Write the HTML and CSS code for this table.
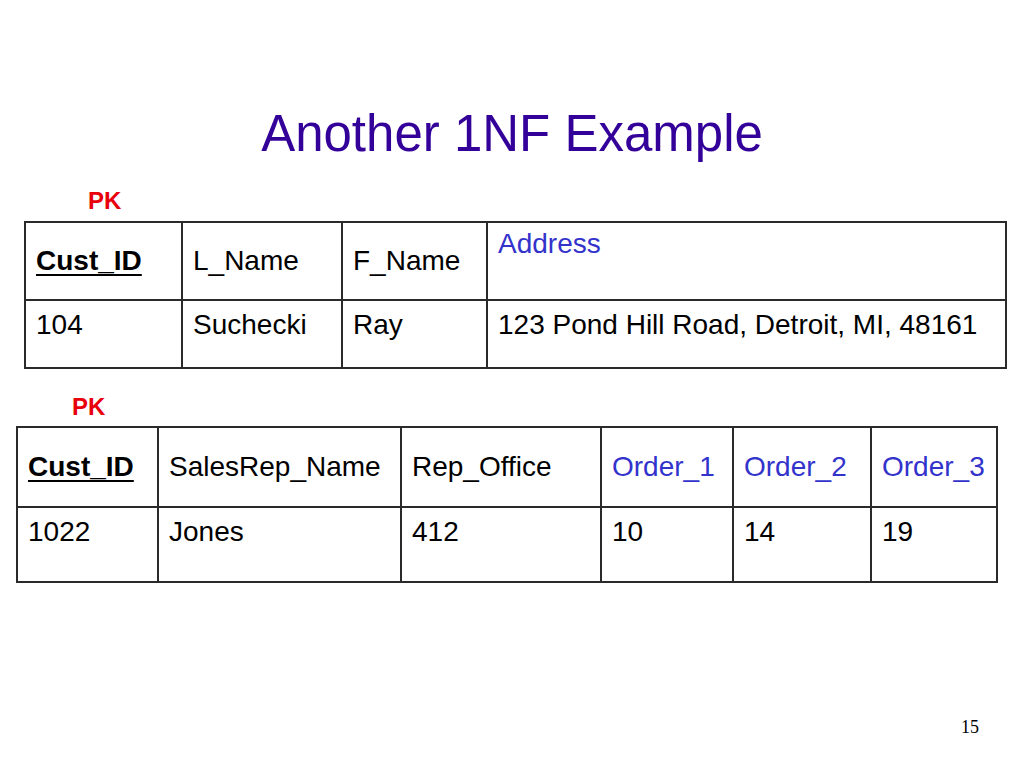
FILE: index.html
```html
<!DOCTYPE html>
<html>
<head>
<meta charset="utf-8">
<link rel="stylesheet" href="styles.css">
</head>
<body>
<div class="slide">
  <h1 class="title">Another 1NF Example</h1>

  <div class="pk pk-one">PK</div>
  <table class="grid grid-one">
    <colgroup>
      <col class="c1a"><col class="c1b"><col class="c1c"><col class="c1d">
    </colgroup>
    <tr class="head-one">
      <td class="mid"><span class="key">Cust_ID</span></td>
      <td class="mid">L_Name</td>
      <td class="mid">F_Name</td>
      <td class="top blue">Address</td>
    </tr>
    <tr class="data-one">
      <td>104</td>
      <td>Suchecki</td>
      <td>Ray</td>
      <td>123 Pond Hill Road, Detroit, MI, 48161</td>
    </tr>
  </table>

  <div class="pk pk-two">PK</div>
  <table class="grid grid-two">
    <colgroup>
      <col class="c2a"><col class="c2b"><col class="c2c"><col class="c2d"><col class="c2e"><col class="c2f">
    </colgroup>
    <tr class="head-two">
      <td class="mid"><span class="key">Cust_ID</span></td>
      <td class="mid">SalesRep_Name</td>
      <td class="mid">Rep_Office</td>
      <td class="mid blue">Order_1</td>
      <td class="mid blue">Order_2</td>
      <td class="mid blue">Order_3</td>
    </tr>
    <tr class="data-two">
      <td>1022</td>
      <td>Jones</td>
      <td>412</td>
      <td>10</td>
      <td>14</td>
      <td>19</td>
    </tr>
  </table>

  <div class="page-num">15</div>
</div>
</body>
</html>
```

FILE: styles.css
```css
html, body {
  margin: 0;
  padding: 0;
  background: #ffffff;
}

.slide {
  width: 1024px;
  height: 768px;
  display: flex;
  flex-direction: column;
  align-items: flex-start;
  background: #ffffff;
  font-family: "Liberation Sans", Arial, sans-serif;
  color: #000000;
  overflow: hidden;
}

.title {
  align-self: stretch;
  margin: 104px 0 0 0;
  font-weight: normal;
  font-size: 51px;
  line-height: 60px;
  text-align: center;
  color: #330099;
}

.pk {
  font-weight: bold;
  font-size: 24px;
  line-height: 28px;
  color: #e8000b;
}

.pk-one {
  margin-top: 23px;
  padding-left: 88px;
}

.pk-two {
  margin-top: 24px;
  padding-left: 72px;
}

.grid {
  border-collapse: separate;
  border-spacing: 0;
  table-layout: fixed;
  border-left: 2px solid #2a2a2a;
  border-top: 2px solid #2a2a2a;
}

.grid td {
  box-sizing: border-box;
  border-right: 2px solid #2a2a2a;
  border-bottom: 2px solid #2a2a2a;
  padding: 8px 2px 0 10px;
  font-size: 28px;
  line-height: 32px;
  vertical-align: top;
  white-space: nowrap;
}

.grid td.mid {
  vertical-align: middle;
  padding-top: 0;
}

.grid td.top {
  vertical-align: top;
  padding-top: 5px;
}

.blue {
  color: #3333cc;
}

.key {
  font-weight: bold;
  text-decoration: underline;
  text-decoration-thickness: 2px;
  text-underline-offset: 4px;
}

/* table one */
.grid-one {
  margin-top: 6px;
  margin-left: 24px;
  width: 983px;
}
.c1a { width: 157px; }
.c1b { width: 160px; }
.c1c { width: 145px; }
.c1d { width: 519px; }
.head-one td { height: 78px; }
.data-one td { height: 68px; }

/* table two */
.grid-two {
  margin-top: 5px;
  margin-left: 16px;
  width: 982px;
}
.c2a { width: 141px; }
.c2b { width: 243px; }
.c2c { width: 200px; }
.c2d { width: 132px; }
.c2e { width: 138px; }
.c2f { width: 126px; }
.head-two td { height: 80px; }
.data-two td { height: 75px; }

.page-num {
  align-self: stretch;
  margin-top: auto;
  padding: 0 45px 31px 0;
  text-align: right;
  font-family: "Liberation Serif", "Times New Roman", serif;
  font-size: 18px;
  line-height: 20px;
  color: #000000;
}
```
